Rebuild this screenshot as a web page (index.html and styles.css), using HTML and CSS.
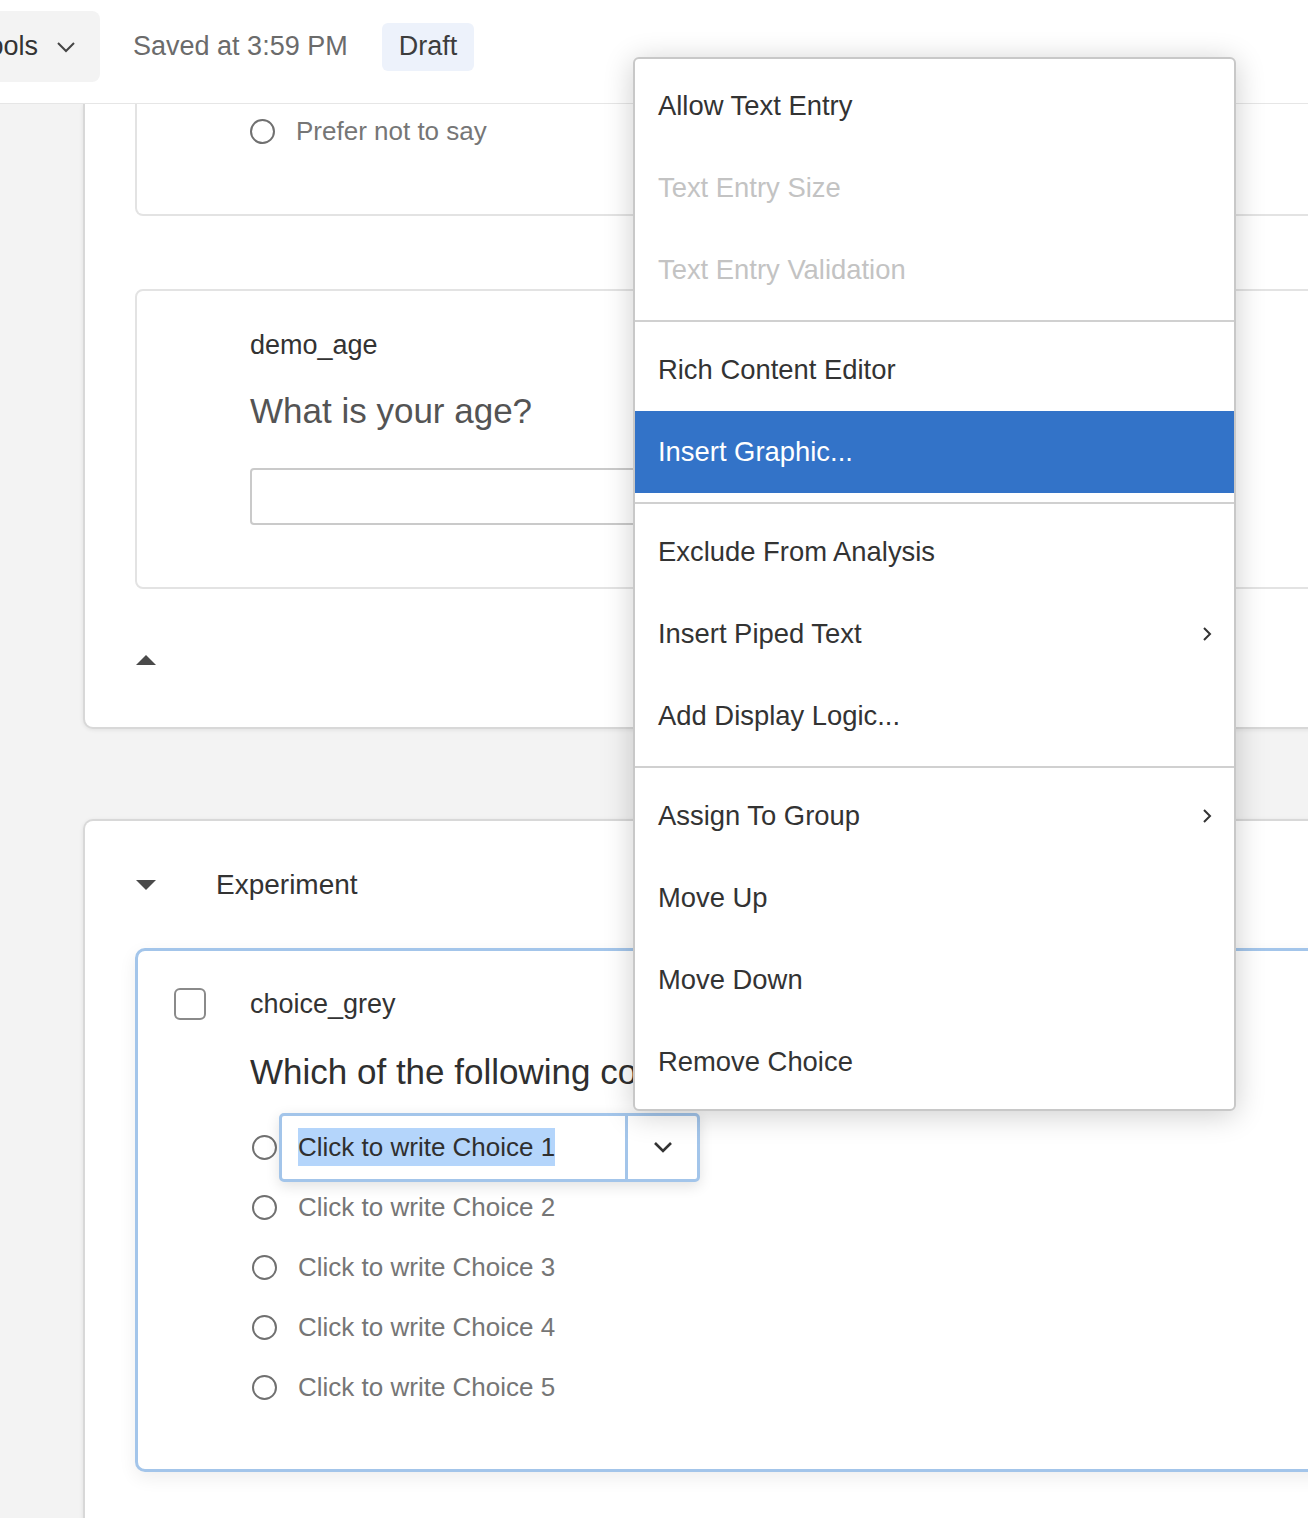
FILE: index.html
```html
<!DOCTYPE html>
<html lang="en">
<head>
<meta charset="utf-8">
<title>Survey editor</title>
<link rel="stylesheet" href="styles.css">
</head>
<body>
<header class="topbar">
  <div class="tools-btn">
    <span>Tools</span>
    <svg class="tools-chev" width="20" height="12" viewBox="0 0 20 12"><path d="M2 2 L10 10 L18 2" fill="none" stroke="#444" stroke-width="2"/></svg>
  </div>
  <span class="saved">Saved at 3:59 PM</span>
  <span class="badge">Draft</span>
</header>

<main class="canvas">
  <section class="block block-top">
    <div class="qcard qcard-cut">
      <div class="choice-row">
        <span class="radio"></span>
        <span class="choice-text">Prefer not to say</span>
      </div>
    </div>
    <div class="qcard qcard-age">
      <div class="qlabel">demo_age</div>
      <div class="qtext qtext-muted">What is your age?</div>
      <div class="text-input"></div>
    </div>
    <div class="block-foot"><span class="tri tri-up"></span></div>
  </section>

  <section class="block block-bottom">
    <div class="block-head">
      <span class="tri tri-down"></span>
      <span class="block-title">Experiment</span>
    </div>
    <div class="qcard qcard-active">
      <div class="qhead">
        <span class="checkbox"></span>
        <span class="qlabel">choice_grey</span>
      </div>
      <div class="qtext qtext-strong">Which of the following colors do you prefer?</div>
      <div class="choices">
        <div class="choice-row">
          <span class="radio"></span>
          <div class="edit-box">
            <div class="edit-field"><span class="selected">Click to write Choice 1</span></div>
            <div class="edit-toggle">
              <svg width="22" height="14" viewBox="0 0 22 14"><path d="M3 3 L11 11 L19 3" fill="none" stroke="#333" stroke-width="2.6"/></svg>
            </div>
          </div>
        </div>
        <div class="choice-row"><span class="radio"></span><span class="choice-text">Click to write Choice 2</span></div>
        <div class="choice-row"><span class="radio"></span><span class="choice-text">Click to write Choice 3</span></div>
        <div class="choice-row"><span class="radio"></span><span class="choice-text">Click to write Choice 4</span></div>
        <div class="choice-row"><span class="radio"></span><span class="choice-text">Click to write Choice 5</span></div>
      </div>
    </div>
  </section>
</main>

<div class="ctx-menu">
  <div class="menu-group">
    <div class="menu-item">Allow Text Entry</div>
    <div class="menu-item disabled">Text Entry Size</div>
    <div class="menu-item disabled">Text Entry Validation</div>
  </div>
  <div class="menu-sep"></div>
  <div class="menu-group">
    <div class="menu-item">Rich Content Editor</div>
    <div class="menu-item active">Insert Graphic...</div>
  </div>
  <div class="menu-sep"></div>
  <div class="menu-group">
    <div class="menu-item">Exclude From Analysis</div>
    <div class="menu-item">Insert Piped Text
      <svg class="sub-chev" width="10" height="16" viewBox="0 0 10 16"><path d="M2 2 L8 8 L2 14" fill="none" stroke="#333" stroke-width="2"/></svg>
    </div>
    <div class="menu-item">Add Display Logic...</div>
  </div>
  <div class="menu-sep"></div>
  <div class="menu-group">
    <div class="menu-item">Assign To Group
      <svg class="sub-chev" width="10" height="16" viewBox="0 0 10 16"><path d="M2 2 L8 8 L2 14" fill="none" stroke="#333" stroke-width="2"/></svg>
    </div>
    <div class="menu-item">Move Up</div>
    <div class="menu-item">Move Down</div>
    <div class="menu-item">Remove Choice</div>
  </div>
</div>
</body>
</html>
```

FILE: styles.css
```css
* { box-sizing: border-box; }

html, body {
  margin: 0;
  padding: 0;
}

body {
  width: 1308px;
  height: 1518px;
  overflow: hidden;
  background: #f3f3f3;
  font-family: "Liberation Sans", Arial, Helvetica, sans-serif;
  color: #333;
  position: relative;
}

/* ---------- top bar ---------- */
.topbar {
  height: 104px;
  background: #fff;
  border-bottom: 1px solid #e6e6e6;
  display: flex;
  align-items: center;
  padding-bottom: 10px;
  position: relative;
  z-index: 2;
}

.tools-btn {
  display: flex;
  align-items: center;
  gap: 18px;
  height: 71px;
  margin-left: -45px;
  padding: 0 24px 0 20px;
  background: #f3f3f3;
  border-radius: 8px;
  font-size: 27px;
  color: #333;
}

.saved {
  margin-left: 33px;
  font-size: 27px;
  color: #6b6b6b;
}

.badge {
  margin-left: 34px;
  height: 48px;
  padding: 0 17px;
  display: flex;
  align-items: center;
  background: #edf2fb;
  border-radius: 6px;
  font-size: 27px;
  color: #3d3d3d;
}

/* ---------- canvas ---------- */
.canvas {
  padding-left: 83px;
  width: 1600px;
}

.block {
  width: 1400px;
  background: #fff;
  border: 2px solid #d8d8d8;
  padding-left: 50px;
  box-shadow: 0 1px 4px rgba(0, 0, 0, 0.08);
}

.block-top {
  border-top: none;
  border-radius: 0 0 10px 10px;
}

.block-bottom {
  margin-top: 90px;
  border-bottom: none;
  border-radius: 10px 10px 0 0;
  height: 720px;
}

.qcard {
  width: 1300px;
  background: #fff;
  border: 2px solid #e3e3e3;
  border-radius: 8px;
}

.qcard-cut {
  border-top: none;
  border-radius: 0 0 8px 8px;
  height: 112px;
  padding: 12px 0 0 113px;
}

.qcard-age {
  margin-top: 73px;
  height: 300px;
  padding: 38px 0 0 113px;
}

.qlabel {
  font-size: 27px;
  line-height: 32px;
  color: #333;
}

.qtext {
  font-size: 35px;
  line-height: 44px;
  margin-top: 28px;
  white-space: nowrap;
}

.qtext-muted { color: #545454; }
.qtext-strong { color: #2f2f2f; margin-top: 30px; }

.text-input {
  margin-top: 35px;
  width: 800px;
  height: 57px;
  border: 2px solid #cacaca;
  border-radius: 4px;
  background: #fff;
}

.block-foot {
  height: 138px;
  padding-top: 66px;
}

.tri {
  display: block;
  width: 0;
  height: 0;
  border-left: 10px solid transparent;
  border-right: 10px solid transparent;
  margin-left: 1px;
}

.tri-up { border-bottom: 10px solid #4a4a4a; }
.tri-down { border-top: 10px solid #4a4a4a; }

.block-head {
  display: flex;
  align-items: center;
  height: 40px;
  margin-top: 44px;
}

.block-title {
  margin-left: 60px;
  font-size: 28px;
  color: #333;
}

.qcard-active {
  margin-top: 43px;
  height: 524px;
  border: 3px solid #a3c5ea;
  border-radius: 10px;
  padding: 37px 0 0 36px;
  box-shadow: 0 6px 18px rgba(0, 0, 0, 0.07);
}

.qhead {
  display: flex;
  align-items: center;
  height: 32px;
}

.checkbox {
  width: 32px;
  height: 32px;
  border: 2px solid #8a8a8a;
  border-radius: 6px;
  margin-right: 44px;
}

.qcard-active .qtext {
  margin-left: 76px;
}

.choices {
  margin-top: 23px;
  margin-left: 78px;
}

.choice-row {
  display: flex;
  align-items: center;
  height: 60px;
}

.qcard-cut .choice-row { height: 30px; }

.radio {
  flex: none;
  width: 25px;
  height: 25px;
  border: 2px solid #707070;
  border-radius: 50%;
  background: #fff;
}

.choice-text {
  margin-left: 21px;
  font-size: 26px;
  color: #767676;
  white-space: nowrap;
}

.edit-box {
  margin-left: 2px;
  width: 421px;
  height: 69px;
  flex: none;
  display: flex;
  border: 3px solid #a3c5ea;
  border-radius: 5px;
  background: #fff;
  box-shadow: 0 4px 14px rgba(0, 0, 0, 0.12);
  position: relative;
}

.edit-field {
  width: 346px;
  display: flex;
  align-items: center;
  padding-left: 16px;
  border-right: 3px solid #a3c5ea;
}

.selected {
  display: inline-block;
  font-size: 26px;
  line-height: 38px;
  background: #b4d5fb;
  color: #2f2f2f;
  white-space: nowrap;
}

.edit-toggle {
  flex: 1;
  display: flex;
  align-items: center;
  justify-content: center;
}

/* ---------- context menu ---------- */
.ctx-menu {
  position: absolute;
  left: 633px;
  top: 57px;
  width: 603px;
  background: #fff;
  border: 2px solid #c8c8c8;
  border-radius: 6px;
  padding: 6px 0;
  box-shadow: 0 4px 30px rgba(0, 0, 0, 0.2);
  z-index: 10;
}

.menu-item {
  height: 82px;
  padding: 0 22px 0 23px;
  display: flex;
  align-items: center;
  justify-content: space-between;
  font-size: 27.4px;
  color: #333;
  white-space: nowrap;
}

.menu-item.disabled { color: #c3c3c3; }

.menu-item.active {
  background: #3373c8;
  color: #fff;
}

.menu-sep {
  height: 2px;
  background: #d0d0d0;
  margin: 9px 0 7px;
}

.sub-chev { flex: none; }
```
